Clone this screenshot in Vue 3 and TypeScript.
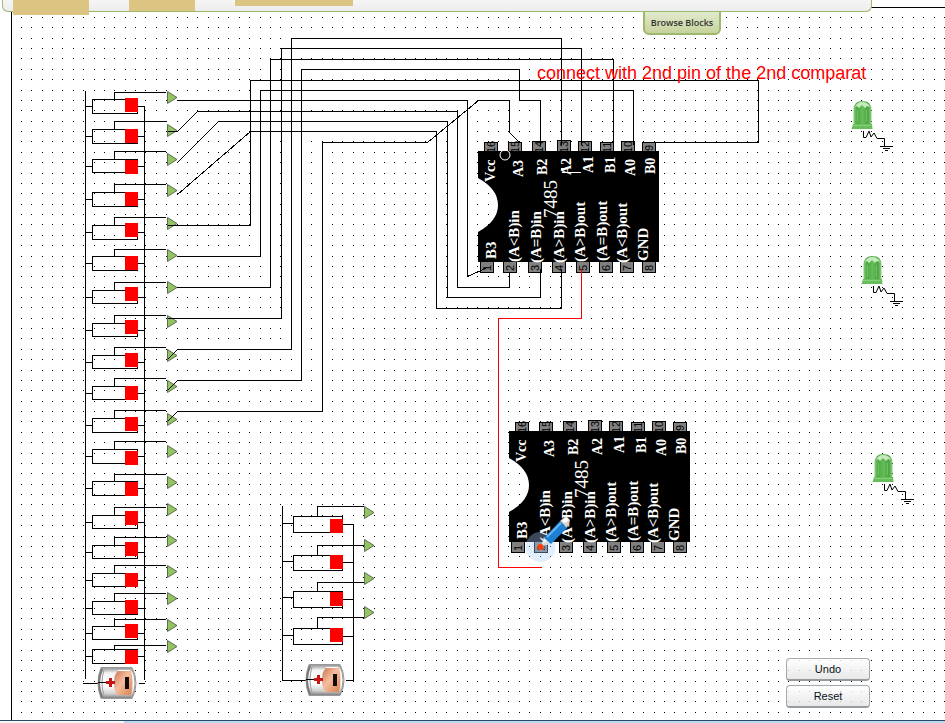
<script setup lang="ts">
import { computed, onMounted, onUnmounted, ref } from 'vue'

interface SwitchRow {
  lead: number
  top: number
  bottom: number
  left: number
  right: number
  knob: number
  arrow: number
}

interface SwitchBank {
  rail: number
  box: number
  boxEnd: number
  tap: number
  tapEnd: number
  arrow: number
  bus: number
  rows: SwitchRow[]
}

const row = (
  lead: number,
  top: number,
  bottom: number,
  left: number,
  right: number,
  knob: number,
  arrow: number,
): SwitchRow => ({ lead, top, bottom, left, right, knob, arrow })

const banks: SwitchBank[] = [
  {
    rail: 85,
    box: 92,
    boxEnd: 137,
    tap: 114,
    tapEnd: 165,
    arrow: 167,
    bus: 144,
    rows: [
      row(92, 99, 113, 106, 106, 98, 97),
      row(121, 129, 143, 136, 136, 129, 130),
      row(151, 159, 172, 166, 166, 160, 159),
      row(184, 192, 206, 199, 199, 192, 190),
      row(217, 225, 239, 232, 232, 223, 223),
      row(249, 256, 270, 263, 263, 256, 255),
      row(282, 290, 303, 297, 297, 287, 287),
      row(315, 323, 336, 330, 330, 320, 321),
      row(347, 355, 368, 362, 362, 353, 355),
      row(378, 386, 399, 393, 393, 386, 386),
      row(410, 418, 432, 425, 425, 417, 419),
      row(441, 449, 463, 456, 456, 451, 451),
      row(474, 481, 495, 488, 488, 482, 482),
      row(507, 515, 528, 522, 522, 511, 509),
      row(537, 545, 558, 552, 552, 542, 540),
      row(565, 573, 586, 580, 580, 573, 571),
      row(593, 601, 614, 608, 608, 600, 598),
      row(619, 626, 639, 633, 633, 624, 625),
      row(645, 649, 663, 656, 656, 650, 646),
    ],
  },
  {
    rail: 282,
    box: 293,
    boxEnd: 342,
    tap: 317,
    tapEnd: 363,
    arrow: 364,
    bus: 353,
    rows: [
      row(506, 516, 532, 523, 524, 519, 512),
      row(545, 555, 570, 561, 562, 555, 545),
      row(582, 591, 607, 597, 599, 592, 578),
      row(617, 628, 644, 635, 636, 628, 612),
    ],
  },
]

const rails = [
  'M85 90V678',
  'M144 106V679',
  'M82 683H104',
  'M138 683H144',
  'M282 505V680H310',
  'M353 524V680H345',
]

const wires = [
  'M177 100H467V276L487 267',
  'M167 131H177L197 111H457V287H509V271',
  'M177 162L218 121H447V297H540V268',
  'M177 194L250 131H436V308H561V268',
  'M167 225H250V80H758V142H655',
  'M177 256H260V90H633V144',
  'M177 287H270V59H613V144',
  'M167 318H281V48H581V144',
  'M167 359L177 349H291V38H561V144',
  'M167 390L177 380H301V69H519V100H540V144',
  'M167 421L177 411H322V142H427L478 100H509V132L519 142',
]

const upperPins = [
  { n: 16, x: 484, y: 142, name: 'Vcc', tx: 495, ty: 182 },
  { n: 15, x: 508, y: 142, name: 'A3', tx: 523, ty: 177 },
  { n: 14, x: 532, y: 141, name: 'B2', tx: 547, ty: 175 },
  { n: 13, x: 557, y: 140, name: 'A2', tx: 571, ty: 175 },
  { n: 12, x: 578, y: 141, name: 'A1', tx: 593, ty: 173 },
  { n: 11, x: 600, y: 142, name: 'B1', tx: 615, ty: 173 },
  { n: 10, x: 621, y: 141, name: 'A0', tx: 635, ty: 176 },
  { n: 9, x: 642, y: 142, name: 'B0', tx: 655, ty: 174 },
]

const lowerPins = [
  { n: 1, x: 480, name: 'B3', tx: 496, ty: 259 },
  { n: 2, x: 503, name: '(A<B)in', tx: 519, ty: 262 },
  { n: 3, x: 528, name: '(A=B)in', tx: 541, ty: 263 },
  { n: 4, x: 552, name: '(A>B)in', tx: 564, ty: 263 },
  { n: 5, x: 576, name: '(A>B)out', tx: 585, ty: 262 },
  { n: 6, x: 599, name: '(A=B)out', tx: 607, ty: 261 },
  { n: 7, x: 620, name: '(A<B)out', tx: 627, ty: 263 },
  { n: 8, x: 642, name: 'GND', tx: 648, ty: 261 },
]

const chips = [
  { id: 'first', dx: 0, dy: 0 },
  { id: 'second', dx: 31, dy: 280 },
]

const leds = [
  { dx: 0, dy: 0 },
  { dx: 10, dy: 155 },
  { dx: 21, dy: 353 },
]

const batteries = [
  { x: 98, y: 667 },
  { x: 306, y: 664 },
]

/* Grid dots sit 10.37 units apart and snap to whole pixels. */
const PITCH = 10.37
const viewport = ref({ width: window.innerWidth, height: window.innerHeight })
const measure = () => {
  viewport.value = { width: window.innerWidth, height: window.innerHeight }
}
onMounted(() => window.addEventListener('resize', measure))
onUnmounted(() => window.removeEventListener('resize', measure))

const dots = computed(() => {
  let d = ''
  for (let y = 17; y < viewport.value.height - 6; y += PITCH) {
    for (let x = 21; x < viewport.value.width; x += PITCH) {
      d += `M${Math.round(x)} ${Math.round(y)}h1v1h-1z`
    }
  }
  return d
})

const switchPath = (b: SwitchBank, r: SwitchRow) =>
  `M${b.rail} ${r.left}H${b.box}M${b.box} ${r.top}H${b.boxEnd}V${r.bottom}H${b.box}Z` +
  `M${b.boxEnd} ${r.right}H${b.bus}M${b.tap} ${r.top}V${r.lead}H${b.tapEnd}`
</script>

<template>
  <div class="page">
    <header class="panel">
      <span class="slot slot-a"></span>
      <span class="slot slot-b"></span>
      <span class="slot slot-c"></span>
      <button class="browse" type="button">Browse Blocks</button>
    </header>

    <main class="board">
      <svg class="circuit" role="img" aria-label="7485 comparator circuit">
        <defs>
          <linearGradient id="led" x1="0" x2="1" y1="0" y2="0">
            <stop offset="0" stop-color="#86cf76" />
            <stop offset=".2" stop-color="#4fa545" />
            <stop offset=".5" stop-color="#64bd58" />
            <stop offset=".8" stop-color="#4ba343" />
            <stop offset="1" stop-color="#8bd17c" />
          </linearGradient>
          <linearGradient id="metal" x1="0" x2="0" y1="0" y2="1">
            <stop offset="0" stop-color="#8f8f8f" />
            <stop offset=".18" stop-color="#f4f4f4" />
            <stop offset=".6" stop-color="#ffffff" />
            <stop offset=".85" stop-color="#d0d0d0" />
            <stop offset="1" stop-color="#777777" />
          </linearGradient>
          <linearGradient id="copper" x1="0" x2="1" y1="0" y2="1">
            <stop offset="0" stop-color="#c97450" />
            <stop offset=".45" stop-color="#f6bd9e" />
            <stop offset="1" stop-color="#d9814f" />
          </linearGradient>
        </defs>

        <g transform="translate(-12 -8)">
          <path class="dots" :d="dots" />

          <g v-for="bank in banks" :key="bank.rail">
            <g v-for="r in bank.rows" :key="r.top">
              <path class="wire" :d="switchPath(bank, r)" transform="translate(.5 .5)" />
              <rect class="knob" :x="bank.boxEnd - 12" :y="r.knob" width="13" height="14" />
              <path
                class="arrow"
                :d="`M${bank.arrow + 0.5} ${r.arrow - 5.5}L${bank.arrow + 10} ${r.arrow + 0.5}L${bank.arrow + 0.5} ${r.arrow + 6.5}Z`"
              />
            </g>
          </g>

          <g transform="translate(.5 .5)">
            <path v-for="d in rails" :key="d" class="wire" :d="d" />
          </g>

          <g v-for="chip in chips" :key="chip.id" :transform="`translate(${chip.dx} ${chip.dy})`">
            <g v-for="pin in upperPins" :key="pin.n">
              <rect class="pin" :x="pin.x + 0.5" :y="pin.y + 0.5" width="13" height="12" />
              <text class="number" :transform="`translate(${pin.x + 11} ${pin.n > 9 ? 153 : 151}) rotate(-90)`">{{ pin.n }}</text>
            </g>
            <g v-for="pin in lowerPins" :key="pin.n">
              <rect class="pin" :x="pin.x + 0.5" y="260.500" width="13" height="12" />
              <text class="number" :transform="`translate(${pin.x + 11} 271) rotate(-90)`">{{ pin.n }}</text>
            </g>
            <path d="M478 151H659V262H478V232Q498 221 498 205Q498 189 478 178Z" />
            <text
              v-for="pin in upperPins"
              :key="pin.name"
              class="label"
              :transform="`translate(${pin.tx} ${pin.ty}) rotate(-90)`"
            >{{ pin.name }}</text>
            <text
              v-for="pin in lowerPins"
              :key="pin.name"
              class="label lower"
              :transform="`translate(${pin.tx} ${pin.ty}) rotate(-90)`"
            >{{ pin.name }}</text>
            <text class="model" transform="translate(557 218) rotate(-90)">7485</text>
          </g>

          <circle class="mark" cx="505" cy="155" r="5" />
          <path class="mark crisp" d="M560.500 168.500H566M562 172.500H581" />

          <g transform="translate(.5 .5)">
            <path v-for="d in wires" :key="d" class="wire" :d="d" />
            <path class="wire live" d="M581 268V318H498V567H541" />
          </g>

          <text class="note" x="537" y="79">connect with 2nd pin of the 2nd comparat</text>

          <g v-for="led in leds" :key="led.dy" :transform="`translate(${led.dx} ${led.dy})`">
            <path fill="url(#led)" d="M853.500 125V109Q854 101 862.500 101Q871 101 871.500 109V125Z" />
            <path fill="#c5eabc" d="M855 107Q857 102 862 102Q868 102 870 107L867 106L865 108L862 105L859 108L857 106Z" />
            <path stroke="#6cc160" fill="none" d="M857.500 110V122M866.500 110V122" />
            <path fill="#66bd59" d="M853 124H872L872.500 129H851.500Z" />
            <path stroke="#84cf78" d="M853 125.500H871" />
            <path class="lead" d="M863.500 131V137.500H866L869 131L871 137L874 133L877 138.500H884.500V146" />
            <path class="lead crisp" d="M880 146.500H893M883 148.500H890M885 150.500H888" />
          </g>

          <g v-for="b in batteries" :key="b.x" :transform="`translate(${b.x} ${b.y})`">
            <path fill="url(#metal)" stroke="#999" d="M3 .5H34Q38 8 38 16T34 31.500H3Q0 24 0 16T3 .5Z" />
            <path stroke="#777" fill="none" stroke-width="2" d="M4 2Q1 9 1 16T4 30" />
            <path stroke="#999" fill="none" d="M6 3Q4 9 4 16T6 28M34 2Q37 9 37 16T34 30" />
            <path fill="url(#copper)" d="M20 4H33Q36 16 33 28H20Q16 25 16 16T20 4Z" />
            <path stroke="#fff" fill="none" d="M20 3.500H32" />
            <path stroke="#c71616" stroke-width="3" d="M8 15.500H17M12.500 11V20" />
            <path stroke="#000" d="M0 15.500H8" />
            <rect x="27" y="10" width="4" height="12" fill="#120b08" />
          </g>

          <g>
            <circle cx="540.500" cy="547" r="15" fill="#a8cffa" fill-opacity=".35" />
            <path fill="#d9dde0" d="M541 546L544 537L552 544Z" />
            <path fill="#fff" d="M543 543L545 537L548 540Z" />
            <path fill="#1d80d2" d="M544 538L560 521L567 528L551 544Z" />
            <path stroke="#63b5f2" stroke-width="2" d="M547 537L561 523" />
            <path fill="#d3d6d8" d="M560 521L566 516L570 520L567 528Z" />
            <path fill="#fff" d="M562 521L566 517L569 520L565 523Z" />
            <circle cx="540.500" cy="547" r="3" fill="#ff3b0a" />
          </g>
        </g>
      </svg>

      <div class="actions">
        <button class="action" type="button">Undo</button>
        <button class="action" type="button">Reset</button>
      </div>
    </main>
    <footer class="taskbar"></footer>
  </div>
</template>

<style>
body {
  margin: 0;
  background: #fff;
}
</style>

<style scoped>
.page {
  position: relative;
  display: flex;
  flex-direction: column;
  min-height: 100vh;
  box-sizing: border-box;
  padding-top: 7px;
  overflow: hidden;
  font-family: "Liberation Sans", sans-serif;
}

.panel {
  position: absolute;
  z-index: 2;
  top: 0;
  left: 2px;
  right: 73px;
  height: 12px;
  box-sizing: border-box;
  display: flex;
  align-items: flex-start;
  padding-left: 10px;
  background: linear-gradient(#f5f5f5, #ededed);
  border: 1px solid #9db76b;
  border-top: 0;
  border-radius: 0 0 6px 6px;
}

.slot {
  flex: none;
  background: #dcc482;
}

.slot-a {
  width: 76px;
  height: 15px;
}

.slot-b {
  width: 66px;
  height: 11px;
  margin-left: 40px;
}

.slot-c {
  width: 118px;
  height: 6px;
  margin-left: 40px;
}

.browse {
  position: absolute;
  top: 11px;
  right: 150px;
  width: 78px;
  height: 24px;
  padding: 0;
  border: 2px solid #9db76b;
  border-top-width: 1px;
  border-radius: 0 0 6px 6px;
  background: linear-gradient(#e2ead0, #c6d39b);
  color: #333;
  font: 600 9px/20px "Open Sans", sans-serif;
  white-space: nowrap;
}

.board {
  position: relative;
  flex: 1;
  display: flex;
  margin-left: 11px;
  border-top: 1px solid #000;
  border-left: 1px solid #000;
}

.circuit {
  flex: 1;
  min-width: 0;
  overflow: visible;
}

.dots {
  fill: #000;
  shape-rendering: crispEdges;
}

.wire {
  fill: none;
  stroke: #000;
  stroke-width: 1px;
  shape-rendering: crispEdges;
}

.live {
  stroke: #f00;
}

.knob {
  fill: #f00;
  stroke: none;
}

.arrow {
  fill: #92c462;
  stroke: #5d6b52;
}

.pin {
  fill: #808080;
  stroke: #000;
}

.number {
  font: 11px "Liberation Sans", sans-serif;
}

.label {
  fill: #fff;
  font: bold 14px "Liberation Serif", serif;
}

.lower {
  font-size: 15px;
}

.model {
  fill: #fff;
  font: 19px "Liberation Serif", serif;
}

.note {
  fill: #f00;
  font: 18px "Liberation Sans", sans-serif;
}

.mark {
  fill: none;
  stroke: #fff;
}

.lead {
  fill: none;
  stroke: #000;
}

.crisp {
  shape-rendering: crispEdges;
}

.actions {
  position: absolute;
  right: 75px;
  bottom: 12px;
  display: flex;
  flex-direction: column;
  gap: 4px;
}

.action {
  width: 84px;
  height: 23px;
  padding: 0;
  border: 1px solid #a5a9ab;
  border-bottom: 2px solid #959b9e;
  border-radius: 4px;
  background: linear-gradient(rgba(255, 255, 255, 0.8), rgba(226, 226, 226, 0.8));
  color: #0b1020;
  font: 11px/20px "Liberation Sans", sans-serif;
}

.taskbar {
  height: 2px;
  border-top: 1px solid #2c4a63;
  background: linear-gradient(90deg, #f4f8fb 124px, #b9d7ef 124px);
}
</style>
